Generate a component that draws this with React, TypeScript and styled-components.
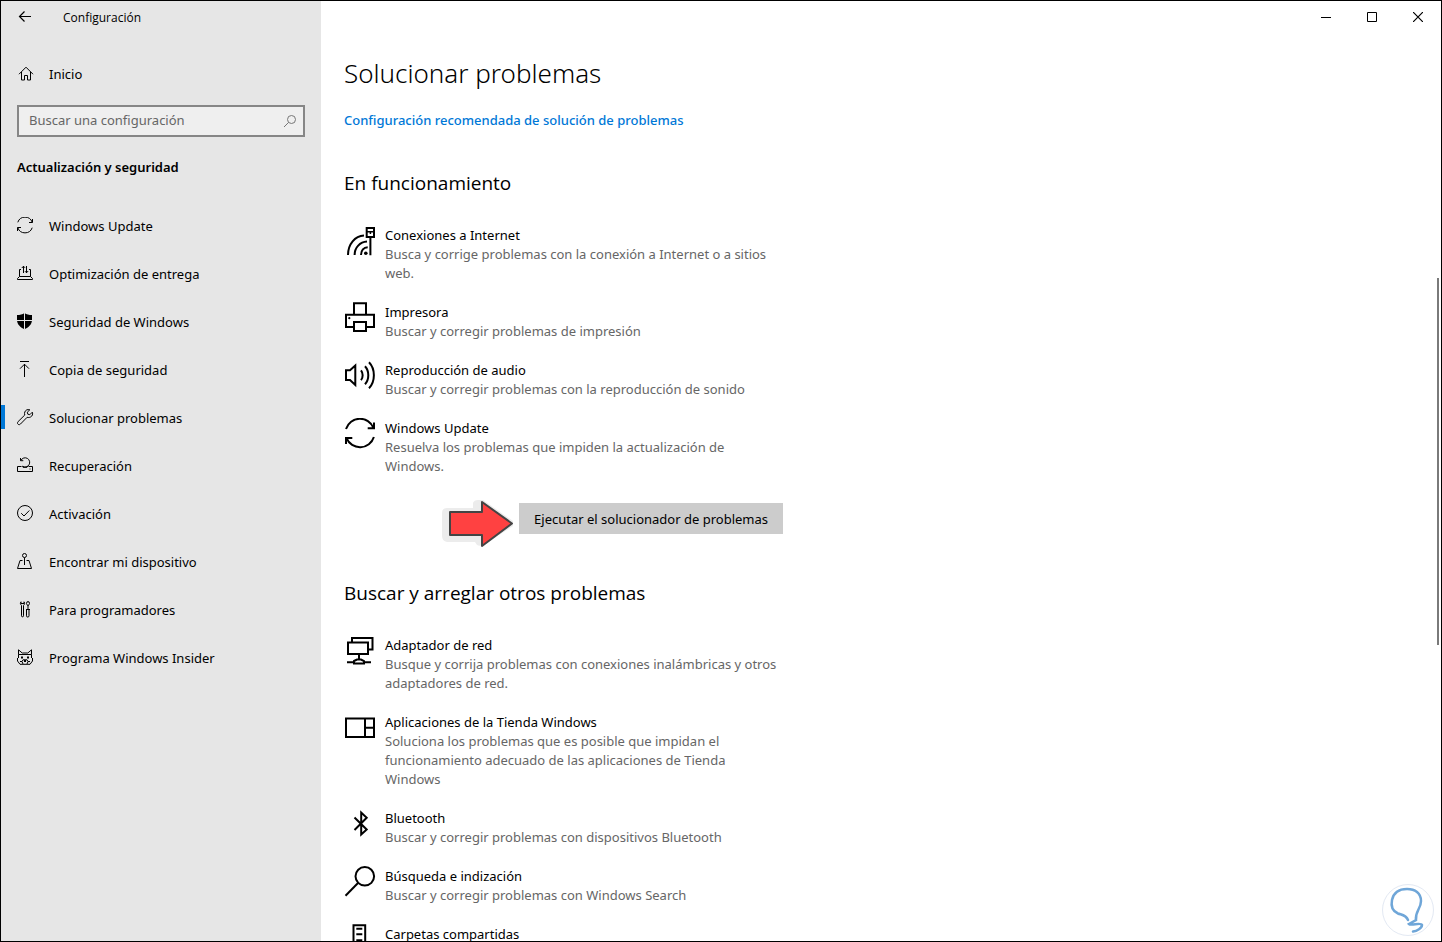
import React from "react";
import styled, { createGlobalStyle } from "styled-components";

const Global = createGlobalStyle`
  * { box-sizing: border-box; }
  body {
    margin: 0;
    background: #fff;
    color: #000;
    font-family: "Noto Sans", "Open Sans", sans-serif;
    font-size: 13px;
    line-height: 20px;
  }
  h1, h2, h3, p, ul { margin: 0; padding: 0; font-weight: 400; }
  ul { list-style: none; }
  svg { display: block; flex: none; fill: none; stroke: currentColor; }
`;

const Window = styled.div`
  position: relative;
  display: flex;
  height: 100vh;
  overflow: hidden;
  border: 1px solid #000;
`;

const Sidebar = styled.aside`
  flex: 0 0 320px;
  background: #e6e6e6;
`;

const SidebarTop = styled.div`
  display: flex;
  align-items: center;
  height: 32px;
`;

const AppName = styled.span`
  padding-top: 2px;
  font-family: "Open Sans", sans-serif;
  font-size: 12px;
`;

const BackButton = styled.button`
  display: flex;
  align-items: center;
  justify-content: center;
  width: 48px;
  height: 32px;
  margin-right: 14px;
  padding: 0;
  border: 0;
  background: none;
  color: #000;
`;

const NavLink = styled.a<{ $active?: boolean }>`
  position: relative;
  display: flex;
  align-items: center;
  gap: 14px;
  height: 48px;
  padding: 0 16px;
  color: #000;
  text-decoration: none;

  &::before {
    content: "";
    display: ${(p) => (p.$active ? "block" : "none")};
    position: absolute;
    left: 0;
    top: 11px;
    width: 4px;
    height: 24px;
    background: #0078d7;
  }
`;

const HomeArea = styled.div`
  margin-top: 17px;
`;

const SearchBox = styled.label`
  display: flex;
  align-items: center;
  height: 32px;
  margin: 7px 16px 0;
  padding: 0 6px 0 10px;
  border: 2px solid #868686;
  background: #efefef;
  color: #767676;
`;

const SearchInput = styled.input`
  flex: 1;
  min-width: 0;
  padding: 0 0 2px;
  border: 0;
  outline: 0;
  background: none;
  font: inherit;
  color: #000;

  &::placeholder { color: #666; opacity: 1; }
`;

const Category = styled.h2`
  margin: 20px 16px 25px;
  font-size: 13px;
  line-height: 20px;
  font-weight: 600;
`;

const Main = styled.main`
  flex: 1;
  min-width: 0;
`;

const WindowControls = styled.div`
  display: flex;
  justify-content: flex-end;
`;

const ControlButton = styled.button`
  display: flex;
  align-items: center;
  justify-content: center;
  width: 46px;
  height: 32px;
  padding: 0;
  border: 0;
  background: none;
  color: #000;
`;

const Content = styled.div`
  max-width: 462px;
  padding: 20px 0 0 23px;
`;

const PageTitle = styled.h1`
  font-size: 26px;
  line-height: 40px;
  font-weight: 300;
`;

const TopLink = styled.a`
  display: block;
  margin-top: 17px;
  color: #0078d7;
  font-weight: 500;
  text-decoration: none;
  white-space: nowrap;
`;

const Section = styled.section<{ $gap: number }>`
  margin-top: ${(p) => p.$gap}px;
`;

const SectionTitle = styled.h2`
  margin-bottom: 28px;
  font-family: "Open Sans", sans-serif;
  font-size: 19px;
  line-height: 28px;
`;

const List = styled.ul`
  display: flex;
  flex-direction: column;
  gap: 19px;
`;

const Item = styled.li`
  display: flex;
  gap: 9px;

  & > svg { margin-bottom: -10px; }
`;

const ItemName = styled.h3`
  font-size: 13px;
  line-height: 20px;
`;

const ItemText = styled.p`
  max-width: 396px;
  line-height: 19px;
  color: #666;
`;

const Action = styled.div`
  display: flex;
  justify-content: flex-end;
  align-items: flex-start;
  gap: 4px;
  height: 34px;
  margin-top: 24px;
`;

const RunButton = styled.button`
  height: 31px;
  margin-top: 3px;
  padding: 0 15px;
  border: 0;
  background: #ccc;
  color: #000;
  font: inherit;
  white-space: nowrap;
`;

const ScrollThumb = styled.div`
  position: absolute;
  top: 29.5%;
  right: 2px;
  width: 2px;
  height: 39%;
  background: #7a7a7a;
`;

const Badge = styled.div`
  position: absolute;
  right: 6px;
  bottom: 4px;
`;

const navIcons: Record<string, React.ReactNode> = {
  home: <path d="M2 9.2 9 2.2 16 9.2M4.5 7V15H7.5V10.5H10.5V15H13.5V7" />,
  update: (
    <path d="M.8 5.3A7.6 7.6 0 0 1 15.2 5.3M15.5 2V5.5H12M15.2 10.7A7.6 7.6 0 0 1 .8 10.7M.5 14V10.5H4" />
  ),
  delivery: (
    <path d="M4 4.5H2.5V11.5H13.5V4.5H12M2.5 11.5.5 13.5V14.5H15.5V13.5L13.5 11.5M6.5 8V1M4.8 3 6.5 1.2 8 2.8M9.5 1V8M8 6.2 9.5 7.8 11.2 6" />
  ),
  shield: (
    <>
      <path
        fill="currentColor"
        stroke="none"
        d="M7.5 0C5.5 1.4 3 2 0 2V7C0 11.5 3.5 14.4 7.5 16.2 11.5 14.4 15 11.5 15 7V2C12 2 9.5 1.4 7.5 0Z"
      />
      <path stroke="#e6e6e6" d="M7.5 0V16.5M0 7.5H15" />
    </>
  ),
  backup: <path d="M3 .5H12M7.5 3V16M3 7.7 7.5 3.2 12 7.7" />,
  wrench: (
    <path d="M15.3 3.2 12.8 5.7 10.8 5.2 10.3 3.2 12.8.8C10.5.1 8.6 1 7.8 3 7.4 4 7.4 5 7.8 6L1.1 12.6C.3 13.6.3 14.6 1 15.2 1.8 15.9 2.8 15.8 3.5 15L10.1 8.3C11.6 8.8 13.5 8.5 14.8 7 15.8 5.8 15.8 4.3 15.3 3.2Z" />
  ),
  recovery: (
    <>
      <path d="M4.5 9.5H.5V14.5H15.5V9.5H11.5M3.5 1V3.7H6.3M4 3.3A4.6 4.6 0 1 1 5.5 9.2L6 10.3H10L10.8 9" />
      <path d="M13 11.5V12.5" />
    </>
  ),
  activation: (
    <>
      <circle cx="8" cy="8" r="7.5" />
      <path d="M4.2 8.2 7 11 12.3 5.5" />
    </>
  ),
  locate: (
    <>
      <circle cx="7.5" cy="2.5" r="2" />
      <path d="M7.5 4.5V12M5.5 7.5H3L.5 15.5H14.5L12 7.5H9.5" />
    </>
  ),
  tools: (
    <path d="M4 .8C3.2 1.6 3 3 4.5 4.5V14.8A1 1 0 0 0 6.5 14.8V4.5C8 3 7.8 1.6 7 .8V2.5H4ZM10 .8H12L12.5 2.5 11.5 4.5H10.5L9.5 2.5ZM11 4.5V8.5M9 8.5H13M9.5 8.5V14.8A1 1 0 0 0 12 14.8V8.5" />
  ),
  insider: (
    <>
      <path d="M1.5 5.5V.8L5.2 4H10.8L14.5.8V5.5M1.5 5.5H14.5M1.5 5.5V9M14.5 5.5V9M.5 9V12L3 15.3H13L15.5 12V9M3 12.5H5L6 10.8H10L11 12.5H13M5 12.5 6 15M11 12.5 10 15" />
      <path strokeWidth="2" d="M4 8.5H6M10 8.5H12M7 12H9" />
    </>
  ),
};

const itemIcons: Record<string, React.ReactNode> = {
  internet: (
    <>
      <path d="M22.7 3H30V12H22.7ZM26.4 12V30.3M4 30C4 19 11 11 20 10.5M10.6 30C10.6 22.5 16 17 23 16.6M17 30C17 25.5 19.8 22.5 23.7 22.2" />
      <path strokeWidth="1.5" d="M23 6.8H30M26.4 6.5V9" />
      <circle cx="21.8" cy="28.2" r="1.8" fill="currentColor" stroke="none" />
    </>
  ),
  printer: (
    <>
      <path d="M10 12.5V1.3H22V12.5M9 25H2V12.7H30V25H23M10 20H22V29H10Z" />
      <circle cx="5.3" cy="16.2" r="1.1" fill="currentColor" stroke="none" />
    </>
  ),
  audio: (
    <path d="M2 10.3V20H6L11.3 25V5.5L6 10.3ZM17 10.3C19.2 13 19.2 17.5 17 20.2M21 6.2C25.4 11 25.4 19.4 21 24.2M25 2.2C31.5 9 31.5 21.4 25 28.2" />
  ),
  update: (
    <path d="M2 11A14.6 14.6 0 0 1 29.5 10M30 4.5V10.3H23.7M29.9 19A14.6 14.6 0 0 1 2.5 20.2M2 26V20H8.3" />
  ),
  network: (
    <path d="M4 7.5H24V19H4ZM8 7.5V3H28.5V14.5H24M15 19V24M3 27.2H10M20 27.2H27M10 26 13 24.5H17L20 26V28.5H10Z" />
  ),
  apps: <path d="M2 6.5H30V25H2ZM21 6.5V25M21 15.7H30" />,
  bluetooth: <path d="M10.5 9.5 22.7 21.5 17.2 26.5V4.5L22.7 9.7 10.5 22" />,
  search: (
    <>
      <circle cx="20.8" cy="10.3" r="9.3" />
      <path d="M1.5 29.7 14 17" />
    </>
  ),
  folders: (
    <path d="M9.5 1.2H21.2V30H9.5ZM12.3 4.7H18.3M12.3 10.3H18.3M12.3 16.3H18.3" />
  ),
};

const NavIcon = ({ name }: { name: string }) => (
  <svg width="18" height="18" viewBox="0 0 18 18" aria-hidden="true">
    {navIcons[name]}
  </svg>
);

const ItemIcon = ({ name }: { name: string }) => (
  <svg width="32" height="32" viewBox="0 0 32 32" strokeWidth="2" aria-hidden="true">
    {itemIcons[name]}
  </svg>
);

const nav = [
  ["update", "Windows Update"],
  ["delivery", "Optimización de entrega"],
  ["shield", "Seguridad de Windows"],
  ["backup", "Copia de seguridad"],
  ["wrench", "Solucionar problemas"],
  ["recovery", "Recuperación"],
  ["activation", "Activación"],
  ["locate", "Encontrar mi dispositivo"],
  ["tools", "Para programadores"],
  ["insider", "Programa Windows Insider"],
];

const running = [
  ["internet", "Conexiones a Internet", "Busca y corrige problemas con la conexión a Internet o a sitios web."],
  ["printer", "Impresora", "Buscar y corregir problemas de impresión"],
  ["audio", "Reproducción de audio", "Buscar y corregir problemas con la reproducción de sonido"],
  ["update", "Windows Update", "Resuelva los problemas que impiden la actualización de Windows."],
];

const others = [
  ["network", "Adaptador de red", "Busque y corrija problemas con conexiones inalámbricas y otros adaptadores de red."],
  ["apps", "Aplicaciones de la Tienda Windows", "Soluciona los problemas que es posible que impidan el funcionamiento adecuado de las aplicaciones de Tienda Windows"],
  ["bluetooth", "Bluetooth", "Buscar y corregir problemas con dispositivos Bluetooth"],
  ["search", "Búsqueda e indización", "Buscar y corregir problemas con Windows Search"],
  ["folders", "Carpetas compartidas", ""],
];

const Troubleshooters = ({ items }: { items: string[][] }) => (
  <List>
    {items.map(([icon, name, text]) => (
      <Item key={name}>
        <ItemIcon name={icon} />
        <div>
          <ItemName>{name}</ItemName>
          {text && <ItemText>{text}</ItemText>}
        </div>
      </Item>
    ))}
  </List>
);

const PointerArrow = () => (
  <svg width="74" height="50" viewBox="0 0 74 50" aria-hidden="true">
    <path
      fill="#ececec"
      stroke="none"
      d="M6 8H32V3Q33 0 37 0H42L72 21V26L46 43Q40 47 36 45L34 42H6Q1 41 1 36V13Q1 8 6 8Z"
    />
    <path
      fill="#ff4141"
      stroke="#444"
      strokeWidth="2"
      strokeLinejoin="round"
      d="M9 12H41V2L71 23.5 41 46V35H9Z"
    />
  </svg>
);

export default function App() {
  return (
    <>
      <Global />
      <Window>
        <Sidebar>
          <SidebarTop>
            <BackButton aria-label="Atrás">
              <svg width="14" height="14" viewBox="0 0 14 14" strokeWidth="1.2">
                <path d="M13 6.5H1.5M6.5 1.5 1.5 6.5 6.5 11.5" />
              </svg>
            </BackButton>
            <AppName>Configuración</AppName>
          </SidebarTop>
          <HomeArea>
            <NavLink href="#inicio">
              <NavIcon name="home" />
              Inicio
            </NavLink>
          </HomeArea>
          <SearchBox>
            <SearchInput
              type="text"
              aria-label="Buscar una configuración"
              placeholder="Buscar una configuración"
            />
            <svg width="14" height="14" viewBox="0 0 14 14" aria-hidden="true">
              <circle cx="8.5" cy="5.5" r="4" />
              <path d="M5.6 8.4 1 13" />
            </svg>
          </SearchBox>
          <Category>Actualización y seguridad</Category>
          <nav>
            {nav.map(([icon, label]) => (
              <NavLink key={label} href="#" $active={icon === "wrench"}>
                <NavIcon name={icon} />
                {label}
              </NavLink>
            ))}
          </nav>
        </Sidebar>
        <Main>
          <WindowControls>
            <ControlButton aria-label="Minimizar">
              <svg width="10" height="10" viewBox="0 0 10 10">
                <path d="M0 5.5H10" />
              </svg>
            </ControlButton>
            <ControlButton aria-label="Maximizar">
              <svg width="10" height="10" viewBox="0 0 10 10">
                <path d="M.5.5H9.5V9.5H.5Z" />
              </svg>
            </ControlButton>
            <ControlButton aria-label="Cerrar">
              <svg width="10" height="10" viewBox="0 0 10 10" strokeWidth="1.2">
                <path d="M0 0 10 10M10 0 0 10" />
              </svg>
            </ControlButton>
          </WindowControls>
          <Content>
            <PageTitle>Solucionar problemas</PageTitle>
            <TopLink href="#recomendada">Configuración recomendada de solución de problemas</TopLink>
            <Section $gap={39}>
              <SectionTitle>En funcionamiento</SectionTitle>
              <Troubleshooters items={running} />
              <Action>
                <PointerArrow />
                <RunButton>Ejecutar el solucionador de problemas</RunButton>
              </Action>
            </Section>
            <Section $gap={45}>
              <SectionTitle>Buscar y arreglar otros problemas</SectionTitle>
              <Troubleshooters items={others} />
            </Section>
          </Content>
        </Main>
        <ScrollThumb />
        <Badge>
          <svg width="54" height="54" viewBox="0 0 54 54" aria-hidden="true">
            <circle cx="27" cy="27" r="25.5" fill="#fff" stroke="#e3e9f3" />
            <path
              stroke="#6fa6d8"
              strokeWidth="2.5"
              strokeLinecap="round"
              d="M27 37C25 32 21 32 17 30.5 11 28 10 22 11 17 13 8 20 6 26 6 34 6 40 10 40 18 40 26 34 28 35 37L28 41C30 43 40 39 41 42 41 45 36 48 32 48.5"
            />
          </svg>
        </Badge>
      </Window>
    </>
  );
}
